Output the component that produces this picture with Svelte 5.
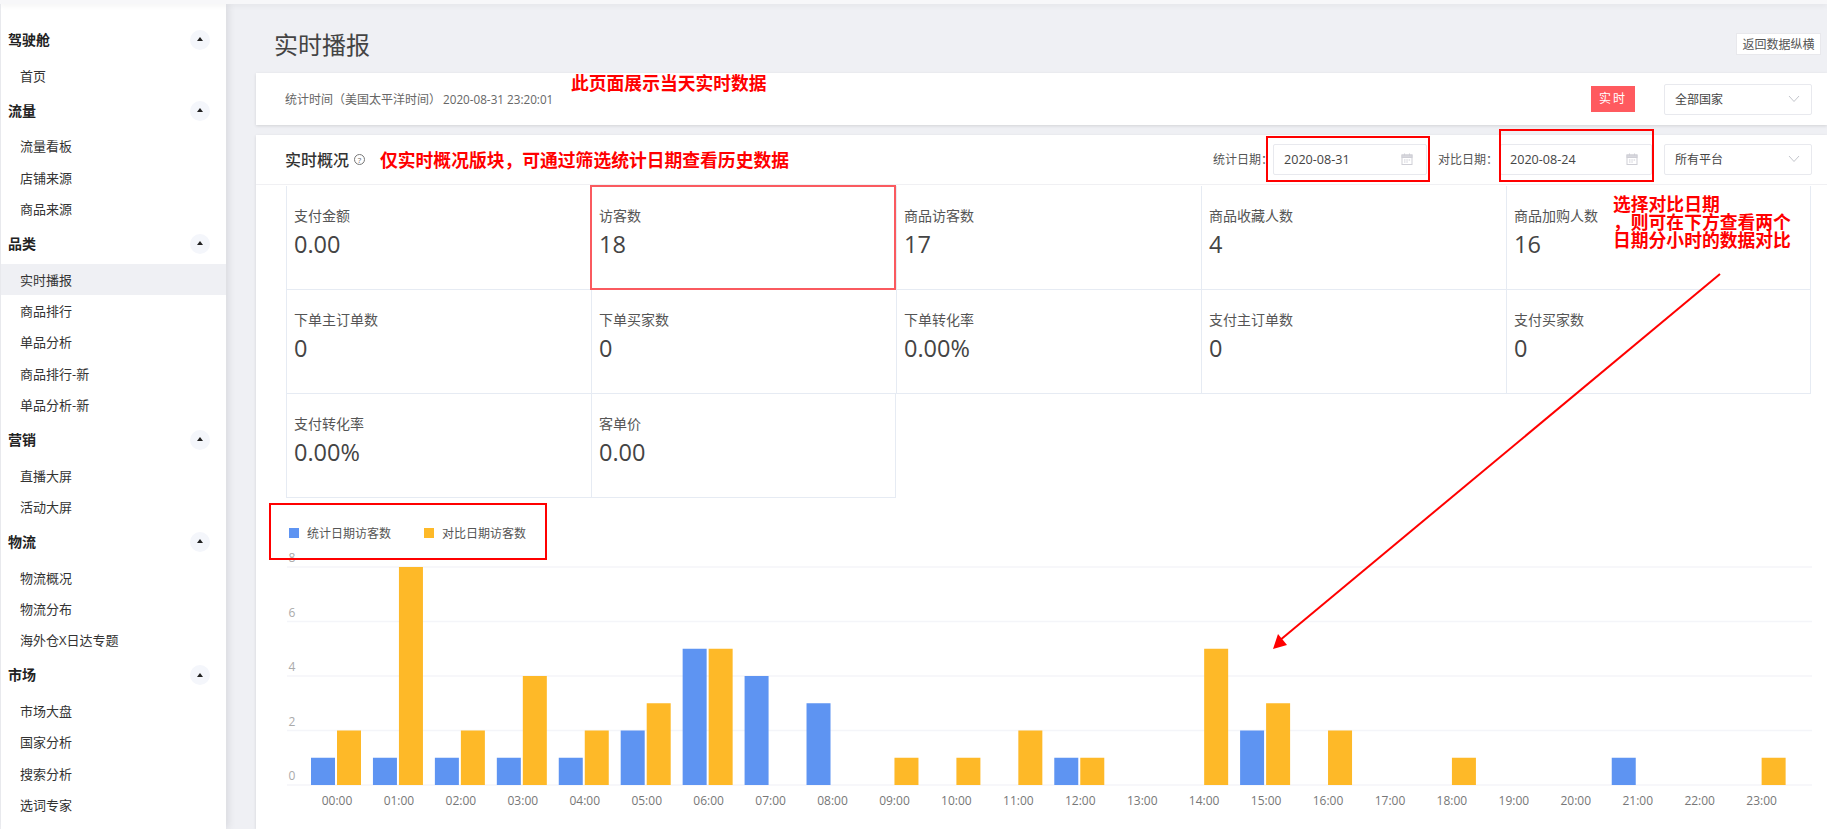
<script>
  const menu = [
    { title: "驾驶舱", items: ["首页"] },
    { title: "流量", items: ["流量看板", "店铺来源", "商品来源"] },
    { title: "品类", items: ["实时播报", "商品排行", "单品分析", "商品排行-新", "单品分析-新"] },
    { title: "营销", items: ["直播大屏", "活动大屏"] },
    { title: "物流", items: ["物流概况", "物流分布", "海外仓X日达专题"] },
    { title: "市场", items: ["市场大盘", "国家分析", "搜索分析", "选词专家"] }
  ];

  const stats = [
    ["支付金额", "0.00"],
    ["访客数", "18"],
    ["商品访客数", "17"],
    ["商品收藏人数", "4"],
    ["商品加购人数", "16"],
    ["下单主订单数", "0"],
    ["下单买家数", "0"],
    ["下单转化率", "0.00%"],
    ["支付主订单数", "0"],
    ["支付买家数", "0"],
    ["支付转化率", "0.00%"],
    ["客单价", "0.00"]
  ];

  const current = [1, 1, 1, 1, 1, 2, 5, 4, 3, 0, 0, 0, 1, 0, 0, 2, 0, 0, 0, 0, 0, 1, 0, 0];
  const compare = [2, 8, 2, 4, 2, 3, 5, 0, 0, 1, 1, 2, 1, 0, 5, 3, 2, 0, 1, 0, 0, 0, 0, 1];

  const base = 238;
  const unit = 27.25;
  const step = 61.94;
  const cx = (i) => 50 + i * step;
  const hour = (i) => String(i).padStart(2, "0") + ":00";
</script>

{#snippet calendar()}
  <svg class="cal" width="12" height="12" viewBox="0 0 12 12" fill="none" stroke="#cfcfd6">
    <rect x="1" y="2" width="10" height="9.5" />
    <rect x="1" y="2" width="10" height="2.5" fill="#d8d8de" />
    <path d="M3.5 .5v2M8.5 .5v2M3 7h1.5M5.3 7h1.5M7.6 7h1.5M3 9h1.5M5.3 9h1.5" />
  </svg>
{/snippet}

{#snippet chevron()}
  <svg class="chev" width="12" height="8" viewBox="0 0 12 8" fill="none" stroke="#c4c6cc">
    <path d="M1 1l5 5.5L11 1" />
  </svg>
{/snippet}

<div class="page">
  <div class="topline"></div>
  <div class="layout">
    <aside class="sidebar">
      {#each menu as group}
        <div class="group-title">
          <span>{group.title}</span>
          <i class="toggle"></i>
        </div>
        {#each group.items as item}
          <div class="item" class:active={item === "实时播报"}>{item}</div>
        {/each}
      {/each}
    </aside>

    <main class="main">
      <div class="page-head">
        <h1>实时播报</h1>
        <button class="back">返回数据纵横</button>
      </div>

      <section class="panel bar">
        <span class="stat-time">统计时间（美国太平洋时间）<span class="stamp">2020-08-31 23:20:01</span></span>
        <div class="bar-right">
          <span class="tag">实时</span>
          <div class="select">全部国家{@render chevron()}</div>
        </div>
      </section>

      <section class="panel overview">
        <div class="overview-head">
          <h2>实时概况</h2>
          <span class="help">?</span>
          <div class="filters">
            <span class="flabel">统计日期：</span>
            <div class="date first">2020-08-31{@render calendar()}</div>
            <span class="flabel second">对比日期：</span>
            <div class="date">2020-08-24{@render calendar()}</div>
            <div class="select">所有平台{@render chevron()}</div>
          </div>
        </div>

        <div class="grid">
          {#each stats as [label, value]}
            <div class="cell">
              <div class="label">{label}</div>
              <div class="value">{value}</div>
            </div>
          {/each}
        </div>

        <div class="legend">
          <i class="swatch blue"></i><span>统计日期访客数</span>
          <i class="swatch orange"></i><span>对比日期访客数</span>
        </div>

        <svg class="chart" width="1525" height="270" viewBox="0 0 1525 270">
          {#each [0, 2, 4, 6, 8] as tick}
            <line x1="0" x2="1525" y1={base - tick * unit} y2={base - tick * unit} class="gridline" />
            <text x="5" y={base - tick * unit - 5} class="ytick">{tick}</text>
          {/each}
          {#each current as v, i}
            {#if v}
              <rect x={cx(i) - 26} y={base - v * unit} width="24" height={v * unit} fill="#5e94f2" />
            {/if}
            {#if compare[i]}
              <rect x={cx(i)} y={base - compare[i] * unit} width="24" height={compare[i] * unit} fill="#feb928" />
            {/if}
            <text x={cx(i)} y="258" class="xtick">{hour(i)}</text>
          {/each}
        </svg>
      </section>
    </main>
  </div>

  <!-- hand-drawn review marks on top of the screenshot -->
  <div class="mark box-visitors"></div>
  <div class="mark box-date1"></div>
  <div class="mark box-date2"></div>
  <div class="mark box-legend"></div>
  <div class="note note-page">此页面展示当天实时数据</div>
  <div class="note note-overview">仅实时概况版块，可通过筛选统计日期查看历史数据</div>
  <div class="note note-compare">选择对比日期<br />，则可在下方查看两个<br />日期分小时的数据对比</div>
  <svg class="arrow" width="1827" height="829" viewBox="0 0 1827 829">
    <line x1="1720" y1="274" x2="1279" y2="641" stroke="#f00" stroke-width="2" />
    <path d="M1273 649L1278 634L1287 645Z" fill="#f00" />
  </svg>
</div>

<style>
  :global(body) {
    margin: 0;
    background: #eff0f4;
  }

  .page {
    position: relative;
    width: 1827px;
    height: 829px;
    overflow: hidden;
    background: #eff0f4;
    font-family: "Open Sans", "Noto Sans CJK SC", sans-serif;
    color: #333;
  }

  .topline {
    position: relative;
    z-index: 2;
    height: 4px;
    background: #f7f7f9;
    box-shadow: 0 2px 5px rgba(0, 0, 0, 0.05);
  }

  .layout {
    display: flex;
    height: 825px;
  }

  .sidebar {
    flex: none;
    width: 225px;
    margin-left: 1px;
    padding-top: 16px;
    background: #fff;
    box-shadow: 2px 0 8px rgba(0, 0, 30, 0.1);
    color: #333;
  }

  .group-title {
    display: flex;
    align-items: center;
    justify-content: space-between;
    height: 39.6px;
    padding: 0 16px 0 7px;
    font-size: 14px;
    font-weight: 700;
    color: #222;
  }

  .group-title span {
    margin-bottom: 2px;
  }

  .toggle {
    position: relative;
    width: 20px;
    height: 20px;
    border-radius: 50%;
    background: #f4f6fb;
  }

  .toggle::after {
    content: "";
    position: absolute;
    left: 7px;
    top: 7.5px;
    border-left: 3px solid transparent;
    border-right: 3px solid transparent;
    border-bottom: 4px solid #222;
  }

  .item {
    height: 31.25px;
    padding-left: 19px;
    font-size: 13px;
    line-height: 33px;
  }

  .item.active {
    background: #eff0f4;
  }

  .main {
    flex: 1;
    padding-left: 30px;
  }

  .page-head {
    display: flex;
    align-items: center;
    justify-content: space-between;
    height: 60px;
    padding: 9px 6px 0 18px;
  }

  h1 {
    margin: 0;
    font-size: 24px;
    font-weight: 400;
    color: #444;
  }

  .back {
    width: 85px;
    height: 22px;
    margin-top: 1px;
    padding: 0;
    border: 1px solid #e8e8ec;
    background: #fff;
    font: inherit;
    font-size: 12px;
    color: #555;
  }

  .panel {
    background: #fff;
    box-shadow: 0 1px 3px rgba(0, 0, 0, 0.12);
  }

  .bar {
    display: flex;
    align-items: center;
    justify-content: space-between;
    height: 52px;
    margin-bottom: 10px;
    padding: 0 15px 0 29px;
  }

  .stat-time {
    font-size: 12px;
    color: #666;
  }

  .stamp {
    margin-left: 2px;
    font-size: 11.7px;
  }

  .bar-right {
    display: flex;
    align-items: center;
    gap: 29px;
  }

  .tag {
    width: 44px;
    height: 26px;
    background: #ff5a5f;
    color: #fff;
    font-size: 12px;
    line-height: 26px;
    text-align: center;
    letter-spacing: 2px;
  }

  .select,
  .date {
    display: flex;
    align-items: center;
    justify-content: space-between;
    box-sizing: border-box;
    height: 31px;
    border: 1px solid #e8e9ee;
    border-radius: 2px;
    font-size: 12px;
    color: #444;
    background: #fff;
  }

  .select {
    width: 148px;
    padding: 0 11px 0 10px;
  }

  .date {
    width: 152px;
    padding: 0 13px 0 9px;
    font-size: 12.6px;
  }

  .date.first {
    width: 154px;
    padding-left: 10px;
  }

  .overview {
    height: 694px;
  }

  .overview-head {
    display: flex;
    align-items: center;
    box-sizing: border-box;
    height: 50px;
    padding: 0 15px 1px 29px;
    border-bottom: 1px solid #f0f0f3;
  }

  h2 {
    margin: 0;
    font-size: 16px;
    font-weight: 500;
    color: #333;
  }

  .help {
    box-sizing: border-box;
    width: 11px;
    height: 11px;
    margin-left: 5px;
    border: 1px solid #777;
    border-radius: 50%;
    font-size: 8px;
    line-height: 9px;
    text-align: center;
    color: #666;
  }

  .filters {
    display: flex;
    align-items: center;
    margin-left: auto;
  }

  .flabel {
    width: 60px;
    font-size: 12px;
    color: #555;
  }

  .flabel.second {
    width: 62px;
    margin-left: 11px;
  }

  .filters .select {
    margin-left: 12px;
  }

  .grid {
    display: grid;
    grid-template-columns: repeat(5, 305px);
    grid-auto-rows: 104px;
    width: 1525px;
    margin: 1px 0 0 30px;
  }

  .cell {
    box-sizing: border-box;
    padding: 20px 0 0 7px;
    border-left: 1px solid #e6ebf3;
    border-bottom: 1px solid #e6ebf3;
  }

  .cell:nth-child(5n),
  .cell:last-child {
    border-right: 1px solid #e6ebf3;
  }

  .label {
    font-size: 14px;
    line-height: 20px;
    color: #555;
  }

  .value {
    margin-top: 1.5px;
    font-size: 23.5px;
    line-height: 32px;
    color: #444;
  }

  .legend {
    display: flex;
    align-items: center;
    height: 12px;
    margin: 29px 0 0 33px;
    font-size: 12px;
    color: #555;
  }

  .legend span {
    margin-right: 33px;
  }

  .swatch {
    width: 10px;
    height: 10px;
    margin-right: 8px;
  }

  .blue {
    background: #5e94f2;
  }

  .orange {
    background: #feb928;
  }

  .chart {
    display: block;
    margin: 8px 0 0 31px;
  }

  .gridline {
    stroke: #f4f5f9;
    stroke-width: 1.5;
  }

  .ytick {
    font-size: 12px;
    fill: #aaa;
    text-anchor: middle;
  }

  .xtick {
    font-size: 12px;
    fill: #777;
    text-anchor: middle;
  }

  .mark {
    position: absolute;
    box-sizing: border-box;
    border: 2px solid #f00;
  }

  .box-visitors {
    left: 590px;
    top: 185px;
    width: 306px;
    height: 105px;
    border-color: #fa5a5f;
  }

  .box-date1 {
    left: 1266px;
    top: 136px;
    width: 164px;
    height: 46px;
  }

  .box-date2 {
    left: 1499px;
    top: 129px;
    width: 155px;
    height: 53px;
  }

  .box-legend {
    left: 269px;
    top: 503px;
    width: 278px;
    height: 57px;
  }

  .note {
    position: absolute;
    font-size: 17.8px;
    font-weight: 700;
    line-height: 18px;
    color: #f00;
    white-space: nowrap;
  }

  .note-page {
    left: 571px;
    top: 74px;
  }

  .note-overview {
    left: 380px;
    top: 151px;
  }

  .note-compare {
    left: 1613px;
    top: 195px;
  }

  .arrow {
    position: absolute;
    left: 0;
    top: 0;
    pointer-events: none;
  }
</style>
